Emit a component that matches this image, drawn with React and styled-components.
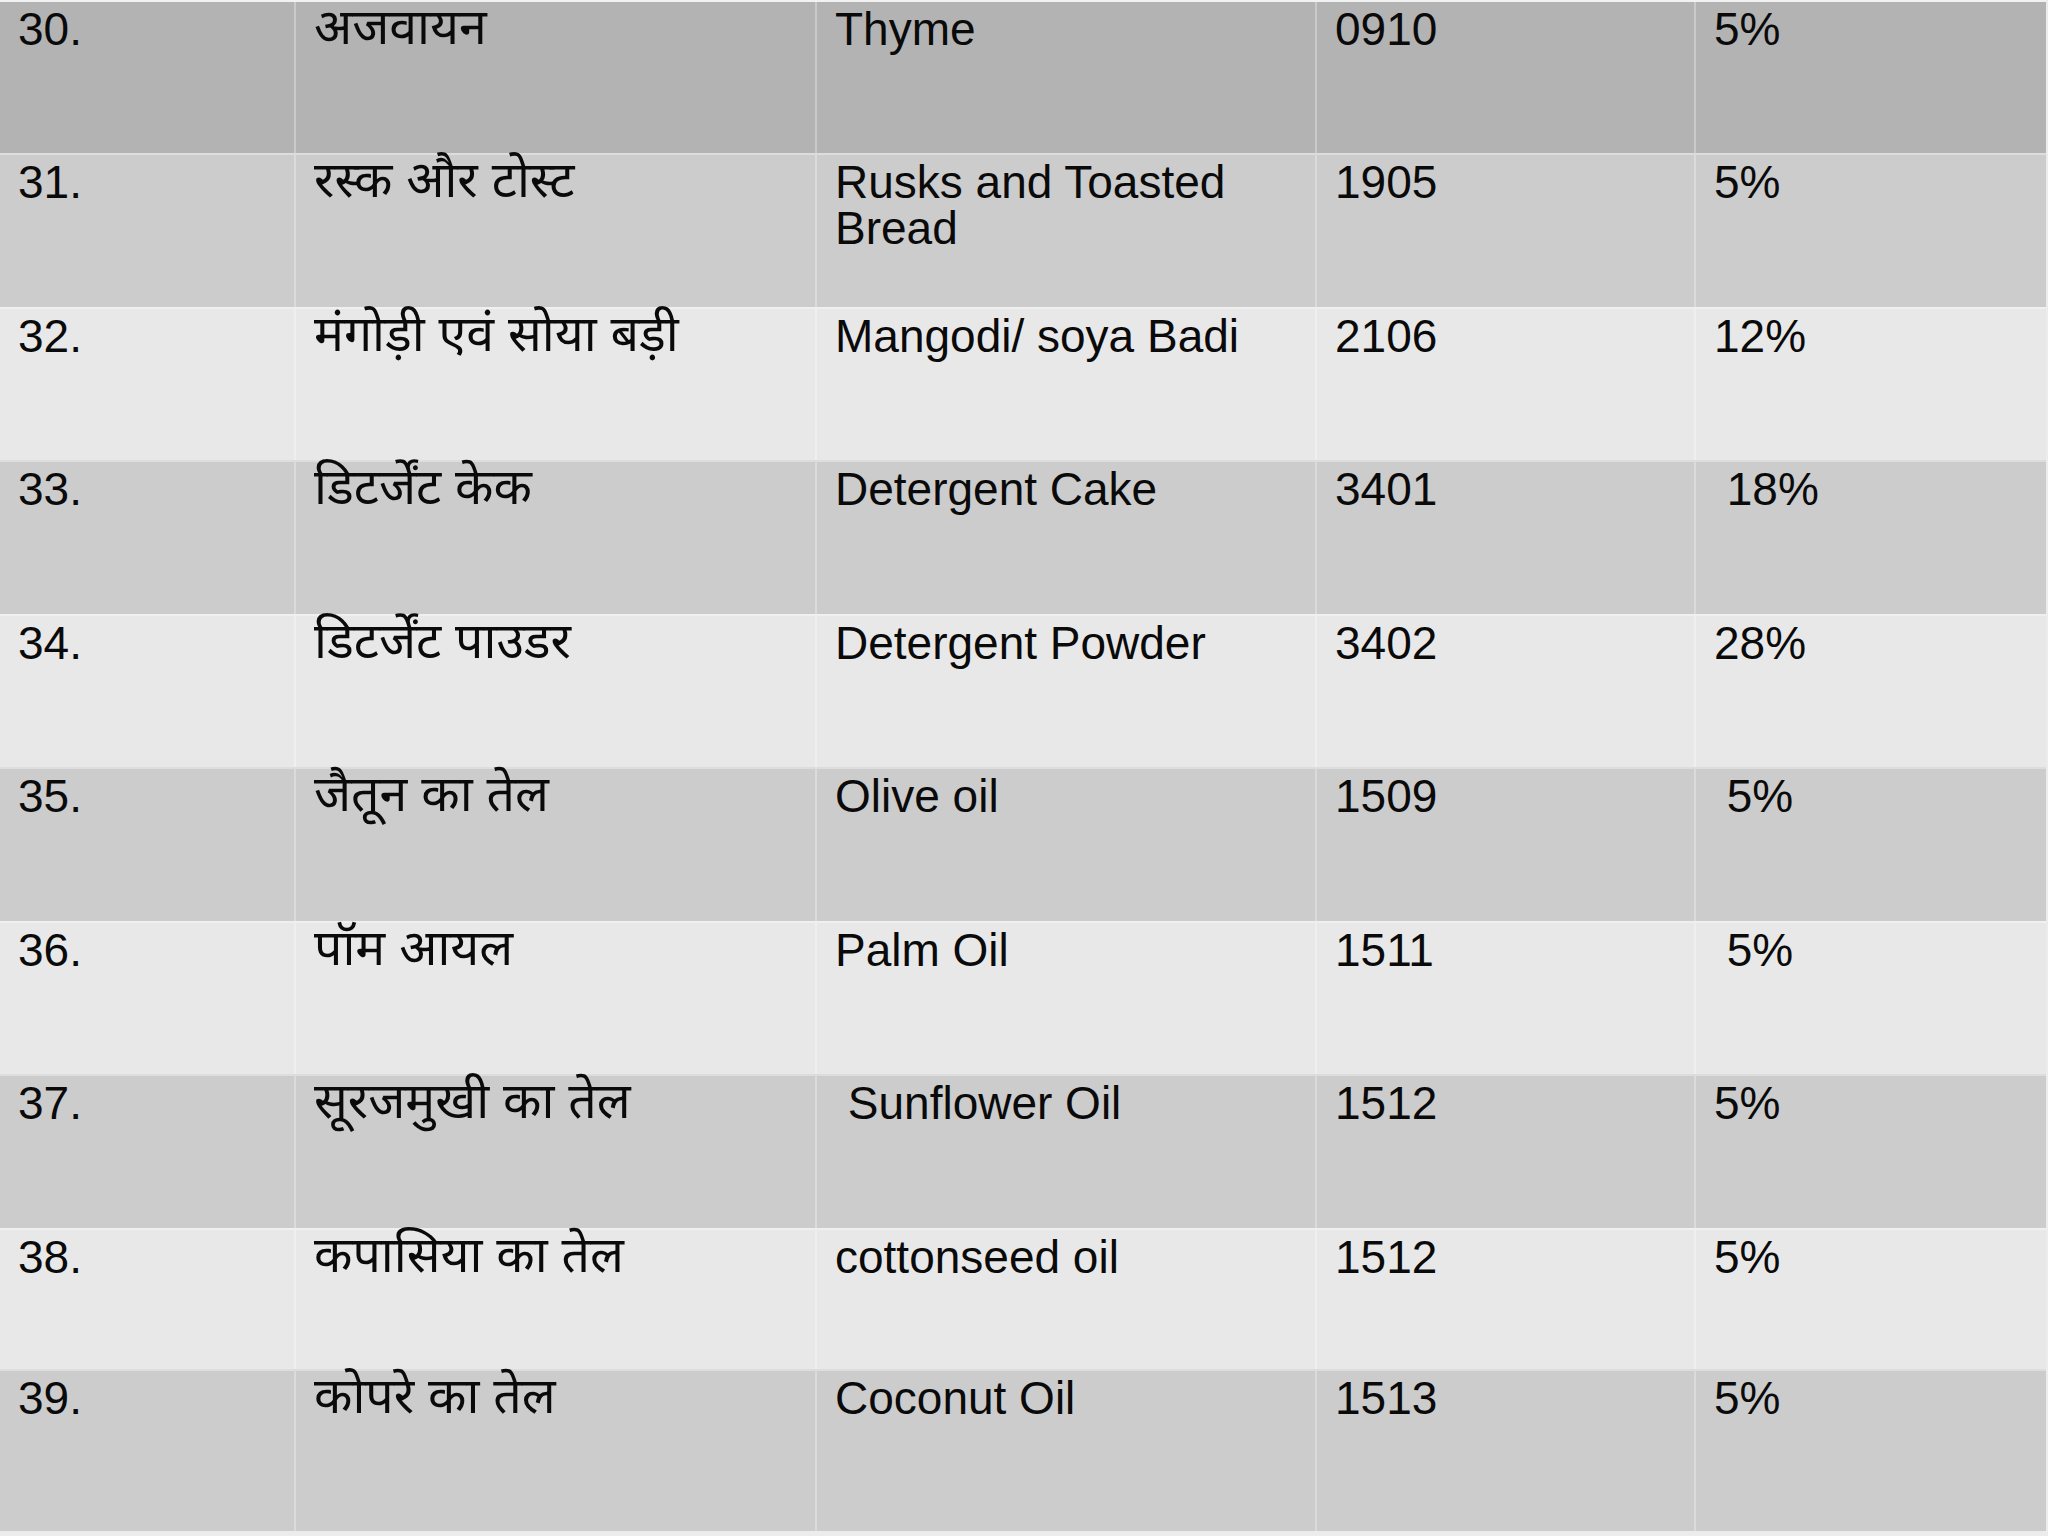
import React from "react";
import styled, { createGlobalStyle } from "styled-components";

const Global = createGlobalStyle`
  html, body { margin: 0; padding: 0; background: #ececec; }
  body { font-family: "Liberation Sans", Arial, "Noto Sans Devanagari", "Noto Sans", sans-serif; }
`;

const Table = styled.div`
  width: 2046px;
  display: grid;
  grid-template-columns: 294px 521px 500px 379px 352px;
  border-top: 2px solid rgba(255, 255, 255, 0.3);
`;

const Row = styled.div`
  display: contents;
`;

const Cell = styled.div`
  height: ${(p) => p.$h}px;
  box-sizing: border-box;
  background: ${(p) => p.$bg};
  padding: 4px 18px 0 18px;
  border-left: ${(p) => (p.$first ? "none" : "2px solid rgba(255,255,255,0.3)")};
  border-top: ${(p) => (p.$top ? "none" : "2px solid rgba(255,255,255,0.35)")};
  font-size: ${(p) => (p.$hindi ? "50px" : "46px")};
  line-height: ${(p) => (p.$hindi ? "42px" : "46px")};
  color: #0a0a0a;
  white-space: pre-wrap;
`;

const rows = [
  ["30.", "अजवायन", "Thyme", "0910", "5%", "#b3b3b3", 151],
  ["31.", "रस्क और टोस्ट", "Rusks and Toasted Bread", "1905", "5%", "#cccccc", 154],
  ["32.", "मंगोड़ी एवं सोया बड़ी", "Mangodi/ soya Badi", "2106", "12%", "#e8e8e8", 153],
  ["33.", "डिटर्जेंट केक", "Detergent Cake", "3401", " 18%", "#cccccc", 154],
  ["34.", "डिटर्जेंट पाउडर", "Detergent Powder", "3402", "28%", "#e8e8e8", 153],
  ["35.", "जैतून का तेल", "Olive oil", "1509", " 5%", "#cccccc", 154],
  ["36.", "पॉम आयल", "Palm Oil", "1511", " 5%", "#e8e8e8", 153],
  ["37.", "सूरजमुखी का तेल", " Sunflower Oil", "1512", "5%", "#cccccc", 154],
  ["38.", "कपासिया का तेल", "cottonseed oil", "1512", "5%", "#e8e8e8", 141],
  ["39.", "कोपरे का तेल", "Coconut Oil", "1513", "5%", "#cccccc", 162],
];

export default function App() {
  return (
    <>
      <Global />
      <Table>
        {rows.map((r, i) => (
          <Row key={i}>
            {r.slice(0, 5).map((t, j) => (
              <Cell
                key={j}
                $bg={r[5]}
                $h={r[6]}
                $first={j === 0}
                $top={i === 0}
                $hindi={j === 1}
              >
                {t}
              </Cell>
            ))}
          </Row>
        ))}
      </Table>
    </>
  );
}
